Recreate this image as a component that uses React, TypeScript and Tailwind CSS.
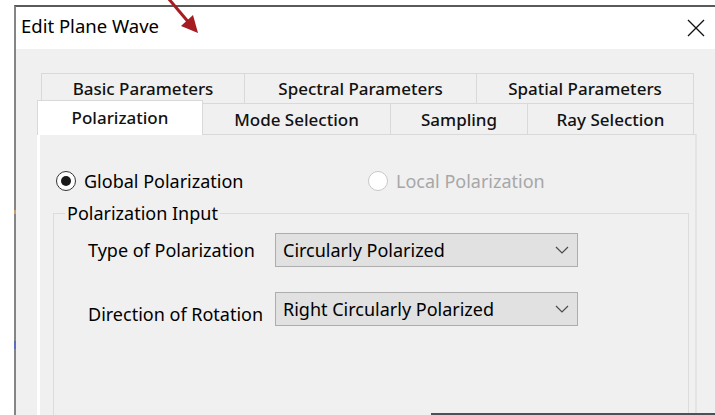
import React from "react";

const tabsTop = [
  { label: "Basic Parameters", w: "w-[204px]" },
  { label: "Spectral Parameters", w: "w-[232px]" },
  { label: "Spatial Parameters", w: "w-[217px]" },
];

const tabsBottom = [
  { label: "Mode Selection", w: "w-[188px]" },
  { label: "Sampling", w: "w-[137px]" },
  { label: "Ray Selection", w: "w-[166px]" },
];

function Chevron() {
  return (
    <svg width="14" height="8" viewBox="0 0 14 8" className="shrink-0">
      <path d="M1 1 L7 7 L13 1" fill="none" stroke="#4a4a4a" strokeWidth="1.2" />
    </svg>
  );
}

function Select({ value }: { value: string }) {
  return (
    <div className="h-[34px] w-[303px] bg-[#e1e1e1] border border-[#adadad] flex items-center justify-between pl-[7px] pr-[8px] text-black">
      <span>{value}</span>
      <Chevron />
    </div>
  );
}

function Radio({ checked, disabled, label }: { checked?: boolean; disabled?: boolean; label: string }) {
  return (
    <div className="flex items-center gap-[8px]">
      <div
        className={
          disabled
            ? "w-[20px] h-[20px] rounded-full border border-[#c8c8c8] bg-white"
            : "w-[20px] h-[20px] rounded-full border border-[#333333] bg-white flex items-center justify-center"
        }
      >
        {checked && <div className="w-[10px] h-[10px] rounded-full bg-[#1a1a1a]" />}
      </div>
      <span className={disabled ? "text-[#a7a7a7]" : "text-black"}>{label}</span>
    </div>
  );
}

export default function App() {
  return (
    <div
      className="relative w-[715px] h-[415px] bg-white overflow-hidden text-[18px] leading-none"
      style={{ fontFamily: '"Noto Sans", "Open Sans", sans-serif' }}
    >
      {/* pointer arrow */}
      <svg className="absolute left-0 top-0" width="220" height="40" viewBox="0 0 220 40">
        <line x1="168" y1="-2" x2="190" y2="24" stroke="#a51d22" strokeWidth="3" />
        <polygon points="198,33 181,26 193,15" fill="#a51d22" />
      </svg>

      <div className="ml-[14px] mt-[5px] h-[410px] border-l-2 border-t-2 border-l-[#858585] border-t-[#5a5a5a] flex flex-col">
        {/* title bar */}
        <div className="h-[42px] bg-white flex items-center justify-between pl-[5px] pr-[10px] shrink-0">
          <span className="text-[18.5px] text-black pb-[3px]">Edit Plane Wave</span>
          <svg width="18" height="18" viewBox="0 0 18 18">
            <path d="M1 1 L17 17 M17 1 L1 17" stroke="#111" strokeWidth="1.3" />
          </svg>
        </div>

        {/* body */}
        <div className="flex-1 bg-[#f0f0f0] pt-[24px] pl-[21px] relative">
          <div className="w-[660px]">
            {/* upper tab row */}
            <div className="flex ml-[4px] h-[30px] text-[17px] font-medium">
              {tabsTop.map((t, i) => (
                <div
                  key={t.label}
                  className={
                    (i === 0 ? "border-l " : "") +
                    t.w +
                    " h-full border-t border-r border-[#d9d9d9] flex items-center justify-center text-[#111]"
                  }
                >
                  {t.label}
                </div>
              ))}
            </div>

            {/* lower tab row */}
            <div className="flex items-end h-[31px] relative text-[17px] font-medium">
              <div className="w-[166px] h-[35px] -mb-[1px] bg-white border-t border-l border-r border-[#d9d9d9] flex items-center justify-center text-[#111] relative z-10 pb-[2px]">
                Polarization
              </div>
              {tabsBottom.map((t) => (
                <div
                  key={t.label}
                  className={
                    t.w +
                    " h-[31px] border-t border-r border-[#d9d9d9] flex items-center justify-center text-[#111]"
                  }
                >
                  {t.label}
                </div>
              ))}
            </div>

            {/* tab page */}
            <div className="h-[300px] border-t border-[#d9d9d9] border-l-[3px] border-l-white border-r-2 border-r-[#e4e4e4] bg-[#f0f0f0] pt-[36px]">
              <div className="flex items-center pl-[16px]">
                <div className="w-[312px]">
                  <Radio checked label="Global Polarization" />
                </div>
                <Radio disabled label="Local Polarization" />
              </div>

              <fieldset className="ml-[13px] mr-[6px] mt-[13px] border border-[#dcdcdc] h-[260px] p-0">
                <legend className="ml-[11px] px-[2px] text-black">Polarization Input</legend>
                <div className="grid grid-cols-[187px_303px] items-center gap-y-[25px] pl-[34px] pt-[11px] text-black">
                  <span>Type of Polarization</span>
                  <Select value="Circularly Polarized" />
                  <span className="pt-[10px]">Direction of Rotation</span>
                  <Select value="Right Circularly Polarized" />
                </div>
              </fieldset>
            </div>
          </div>
        </div>
      </div>

      {/* stray marks on the window frame */}
      <div className="absolute left-[14px] top-[210px] w-[2px] h-[4px] bg-[#c8a070]" />
      <div className="absolute left-[14px] top-[341px] w-[2px] h-[8px] bg-[#5b6fb8]" />

      {/* edge of a neighbouring window */}
      <div className="absolute left-[431px] bottom-0 w-[284px] h-[2px] bg-[#4b5257]" />
    </div>
  );
}
